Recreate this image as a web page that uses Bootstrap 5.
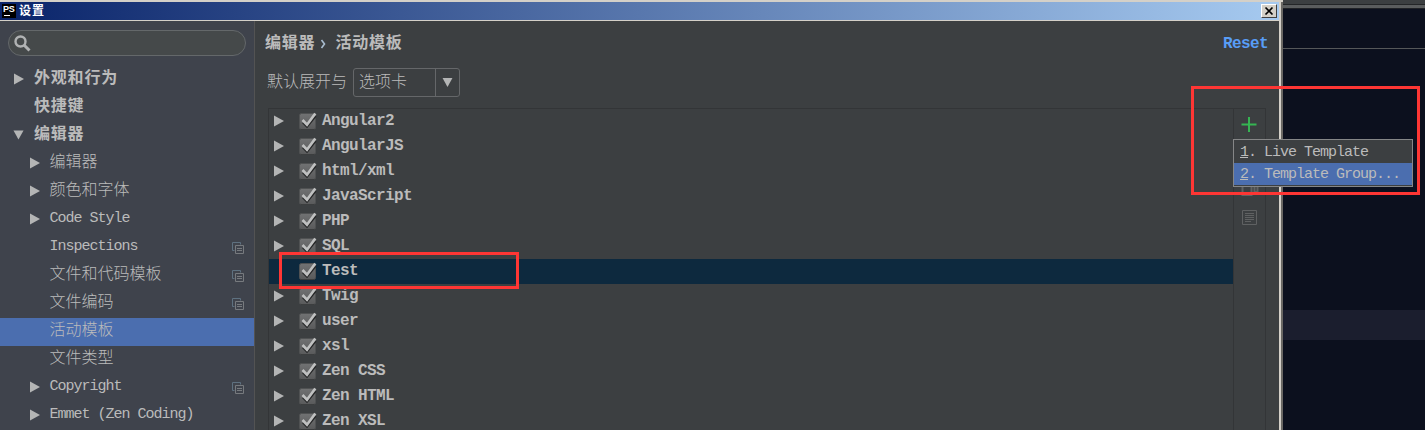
<!DOCTYPE html>
<html lang="zh-CN">
<head>
<meta charset="utf-8">
<title>设置</title>
<meta name="viewport" content="width=device-width, initial-scale=1">
<link href="https://cdn.jsdelivr.net/npm/bootstrap@5.3.0/dist/css/bootstrap.min.css" rel="stylesheet">
<script src="https://cdn.jsdelivr.net/npm/bootstrap@5.3.0/dist/js/bootstrap.bundle.min.js"></script>
<style>
body{height:430px;background:#0c101e;color:#bbb;font:300 16px/28px "Liberation Mono","Noto Sans CJK SC",monospace;overflow:hidden}
svg{display:block;flex:none}
.dialog{width:1283px;background:#3c3f41;border-top:2px solid #d4d0c8}
.titlebar{height:18px;width:1279px;background:linear-gradient(90deg,#0a246a,#a6caf0);color:#fff;font-size:12px;font-weight:700;line-height:18px;padding-left:2px;padding-right:2px}
.titlebar .caption{letter-spacing:1px;margin-left:3px;padding-top:2px}
.ps{width:14px;height:14px;background:#000;font:700 9px/9px "Liberation Sans",sans-serif;letter-spacing:-.3px;padding-left:1px;padding-top:1px}
.ps::after{content:"";display:block;width:6px;height:1px;background:#fff;margin:1px 0 0 1px}
.closer{width:16px;height:14px;background:#d4d0c8;border:1px solid;border-color:#fff #404040 #404040 #fff;border-radius:0;padding:0}
.frame{border-right:2px solid #6a6864;height:428px}
.inner{border-right:2px solid #d4d0c8;width:1281px}
.content-row{border-top:1px solid #d4d0c8;min-height:0}
.sidebar{width:255px;background:#3f434c;border-right:1px solid #535353;overflow:hidden}
.search{height:26px;margin:9px 8px 10px;border:1px solid #64686a;border-radius:13px;background:#45494a;padding:4px 5px}
.tree-row{height:28px;padding-left:14px;padding-right:10px;flex:none}
.tree-row > svg:first-child{margin-top:-2px}
.tree-row > svg:last-child{margin-top:-1px}
.tree-row .open-arrow{margin-left:-1px}
.tree-row .label{margin-left:10px;letter-spacing:.8px;font-weight:700;padding-bottom:2px}
.tree-row.sub{padding-left:30px}
.tree-row.sub .label{font-weight:300;letter-spacing:0;margin-left:9.5px}
.tree-row .label.latin{font-size:15px;letter-spacing:-1px;padding-bottom:2px}
.tree-row.chosen{background:#4b6eaf}
.gap-arrow{width:10px;flex:none}
.main{padding-left:10px;min-width:0}
.crumbs{height:44px;font-weight:700;letter-spacing:.8px;line-height:42px;padding-top:2px}
.crumbs .here{margin-left:8px}
.reset{color:#589df6;margin-right:11px;letter-spacing:-.6px}
.expand{height:43px;padding:3px 0 0 2px;line-height:30px;align-items:flex-start}
.combo{width:107px;height:29px;border:1px solid #656769;border-radius:3px;margin-left:6px;line-height:29px}
.combo .value{width:82px;height:27px;border-right:1px solid #656769;padding-left:5px}
.listbox{width:966px;margin-left:3px;border:1px solid #333537;border-bottom:0}
.item{height:25px;padding-left:5px;line-height:25px;font-weight:700;letter-spacing:-.6px}
.item > svg:first-child{margin-top:-1px}
.item .check{margin:-1px 5px 0 15px}
.item.chosen{background:#0d293e}
.tools{width:32px;border-top:1px solid #333537;border-right:1px solid #333537;padding:7px 0 0 7px}
.doc-icon{margin-top:13px}
.popup{left:1233px;top:139px;width:180px;height:48px;background:#3c3f41;border:1px solid #858687;font-size:15px;letter-spacing:-1px;line-height:23px}
.popup div{height:22px;padding-left:6px;white-space:pre}
.popup div:first-child{height:23px;line-height:25px}
.popup .chosen{background:#4b6eaf}
.mark-box{border:3px solid #fe3634;pointer-events:none}
.mark-test{left:279px;top:252px;width:240px;height:37px}
.mark-menu{left:1191px;top:86px;width:229px;height:109px}
.backdrop-top{height:9px;background:#3c3f41;border-bottom:1px solid #202226}
.backdrop-top::before{content:"";display:block;height:8px;border-bottom:3px solid #5b5d5e;box-shadow:inset 0 -1px #242628}
.backdrop-tabs{height:40px;border-bottom:1px solid #555759}
.caret-line{height:30px;background:#1b1e2e;margin-top:261px}
</style>
</head>
<body class="d-flex position-relative">
<svg width="0" height="0" class="position-absolute">
  <defs>
    <linearGradient id="cb" x2="0" y2="1"><stop stop-color="#717273"/><stop offset="1" stop-color="#595a5b"/></linearGradient>
    <symbol id="right" viewBox="0 0 10 12"><path d="M0 .5 10 6 0 11.500z" fill="#b4b5b5"/></symbol>
    <symbol id="down" viewBox="0 0 12 10"><path d="M.5 0h11L6 10z" fill="#b4b5b5"/></symbol>
    <symbol id="tick" viewBox="0 0 18 18"><rect x=".5" y="1.500" width="16" height="16" rx="2" fill="url(#cb)" stroke="#505253"/><path d="M1.500 17.500h14" stroke="#2f3132" opacity=".6"/><path d="m4 10.500 4 4L16.500 4" fill="none" stroke="#252627" stroke-width="2.400"/><path d="m3.500 8 4.500 4.700L16.300 1.500" fill="none" stroke="#bfc0c0" stroke-width="2.700"/></symbol>
    <symbol id="copy" viewBox="0 0 12 12"><path d="M2.500 8.500h-2v-8h8v2" fill="none" stroke="#5e7180"/><path d="M3.500 3.500h8v8h-8z" fill="none" stroke="#777a7e"/><path d="M5 6.500h5M5 8.500h5" stroke="#777a7e"/></symbol>
  </defs>
</svg>

<div class="dialog flex-shrink-0">
 <div class="frame">
  <div class="inner d-flex flex-column h-100">
   <div class="titlebar d-flex align-items-center flex-shrink-0">
     <span class="ps">PS</span><span class="caption me-auto">设置</span>
     <button class="closer" aria-label="关闭"><svg width="14" height="12"><path d="m3.500 2.500 7 7m0-7-7 7" stroke="#000" stroke-width="1.700"/></svg></button>
   </div>
   <div class="content-row d-flex flex-grow-1">
    <nav class="sidebar d-flex flex-column flex-shrink-0">
      <div class="search flex-shrink-0"><svg width="17" height="17"><circle cx="6.500" cy="6.500" r="5" fill="none" stroke="#b0b2b3" stroke-width="2.400"/><path d="m10 10 5.500 5.500" stroke="#b0b2b3" stroke-width="3"/></svg></div>
      <div class="tree-row d-flex align-items-center"><svg width="10" height="12"><use href="#right"/></svg><span class="label">外观和行为</span></div>
      <div class="tree-row d-flex align-items-center"><span class="gap-arrow"></span><span class="label">快捷键</span></div>
      <div class="tree-row d-flex align-items-center"><svg class="open-arrow" width="11" height="10"><use href="#down"/></svg><span class="label">编辑器</span></div>
      <div class="tree-row sub d-flex align-items-center"><svg width="10" height="12"><use href="#right"/></svg><span class="label">编辑器</span></div>
      <div class="tree-row sub d-flex align-items-center"><svg width="10" height="12"><use href="#right"/></svg><span class="label">颜色和字体</span></div>
      <div class="tree-row sub d-flex align-items-center"><svg width="10" height="12"><use href="#right"/></svg><span class="label latin">Code Style</span></div>
      <div class="tree-row sub d-flex align-items-center"><span class="gap-arrow"></span><span class="label latin me-auto">Inspections</span><svg width="12" height="12"><use href="#copy"/></svg></div>
      <div class="tree-row sub d-flex align-items-center"><span class="gap-arrow"></span><span class="label me-auto">文件和代码模板</span><svg width="12" height="12"><use href="#copy"/></svg></div>
      <div class="tree-row sub d-flex align-items-center"><span class="gap-arrow"></span><span class="label me-auto">文件编码</span><svg width="12" height="12"><use href="#copy"/></svg></div>
      <div class="tree-row sub chosen d-flex align-items-center"><span class="gap-arrow"></span><span class="label">活动模板</span></div>
      <div class="tree-row sub d-flex align-items-center"><span class="gap-arrow"></span><span class="label">文件类型</span></div>
      <div class="tree-row sub d-flex align-items-center"><svg width="10" height="12"><use href="#right"/></svg><span class="label latin me-auto">Copyright</span><svg width="12" height="12"><use href="#copy"/></svg></div>
      <div class="tree-row sub d-flex align-items-center"><svg width="10" height="12"><use href="#right"/></svg><span class="label latin">Emmet (Zen Coding)</span></div>
    </nav>
    <main class="main d-flex flex-column flex-grow-1">
      <div class="crumbs d-flex align-items-center flex-shrink-0"><span>编辑器</span><svg class="ms-1" width="8" height="12"><path d="m2.500 2 3 4-3 4" fill="none" stroke="#a9bdd0" stroke-width="1.600"/></svg><span class="here me-auto">活动模板</span><span class="reset">Reset</span></div>
      <div class="expand d-flex flex-shrink-0"><span>默认展开与</span>
        <div class="combo d-flex"><span class="value">选项卡</span><span class="d-flex flex-grow-1 align-items-center justify-content-center"><svg width="11" height="9" viewBox="0 0 12 10"><use href="#down" width="12" height="10"/></svg></span></div>
      </div>
      <div class="d-flex flex-grow-1">
       <div class="listbox">
        <div class="item d-flex align-items-center"><svg width="10" height="12"><use href="#right"/></svg><svg class="check" width="18" height="18"><use href="#tick"/></svg><span>Angular2</span></div>
        <div class="item d-flex align-items-center"><svg width="10" height="12"><use href="#right"/></svg><svg class="check" width="18" height="18"><use href="#tick"/></svg><span>AngularJS</span></div>
        <div class="item d-flex align-items-center"><svg width="10" height="12"><use href="#right"/></svg><svg class="check" width="18" height="18"><use href="#tick"/></svg><span>html/xml</span></div>
        <div class="item d-flex align-items-center"><svg width="10" height="12"><use href="#right"/></svg><svg class="check" width="18" height="18"><use href="#tick"/></svg><span>JavaScript</span></div>
        <div class="item d-flex align-items-center"><svg width="10" height="12"><use href="#right"/></svg><svg class="check" width="18" height="18"><use href="#tick"/></svg><span>PHP</span></div>
        <div class="item d-flex align-items-center"><svg width="10" height="12"><use href="#right"/></svg><svg class="check" width="18" height="18"><use href="#tick"/></svg><span>SQL</span></div>
        <div class="item chosen d-flex align-items-center"><span class="gap-arrow"></span><svg class="check" width="18" height="18"><use href="#tick"/></svg><span>Test</span></div>
        <div class="item d-flex align-items-center"><svg width="10" height="12"><use href="#right"/></svg><svg class="check" width="18" height="18"><use href="#tick"/></svg><span>Twig</span></div>
        <div class="item d-flex align-items-center"><svg width="10" height="12"><use href="#right"/></svg><svg class="check" width="18" height="18"><use href="#tick"/></svg><span>user</span></div>
        <div class="item d-flex align-items-center"><svg width="10" height="12"><use href="#right"/></svg><svg class="check" width="18" height="18"><use href="#tick"/></svg><span>xsl</span></div>
        <div class="item d-flex align-items-center"><svg width="10" height="12"><use href="#right"/></svg><svg class="check" width="18" height="18"><use href="#tick"/></svg><span>Zen CSS</span></div>
        <div class="item d-flex align-items-center"><svg width="10" height="12"><use href="#right"/></svg><svg class="check" width="18" height="18"><use href="#tick"/></svg><span>Zen HTML</span></div>
        <div class="item d-flex align-items-center"><svg width="10" height="12"><use href="#right"/></svg><svg class="check" width="18" height="18"><use href="#tick"/></svg><span>Zen XSL</span></div>
       </div>
       <div class="tools">
        <svg width="17" height="17"><path d="M8 1v15M.500 8.500h15" stroke="#35b552" stroke-width="2"/></svg>
        <svg class="mt-5" width="18" height="16"><path d="M1.500 1v13h9V5M6 4.500h5M13.500 11V3h3v8z" fill="none" stroke="#616364" stroke-width="2"/></svg>
        <svg class="doc-icon" width="17" height="15"><path d="M1.500.5h14v14h-14zM4 3.500h9M4 5.500h9M4 7.500h9M4 9.500h9M4 11.500h6" fill="none" stroke="#5f6162"/></svg>
       </div>
      </div>
    </main>
   </div>
  </div>
 </div>
</div>
<div class="flex-grow-1">
  <div class="backdrop-top"></div>
  <div class="backdrop-tabs"></div>
  <div class="caret-line"></div>
</div>

<div class="popup position-absolute"><div><u>1</u>. Live Template</div><div class="chosen"><u>2</u>. Template Group...</div></div>
<div class="mark-box mark-test position-absolute"></div>
<div class="mark-box mark-menu position-absolute"></div>
</body>
</html>
